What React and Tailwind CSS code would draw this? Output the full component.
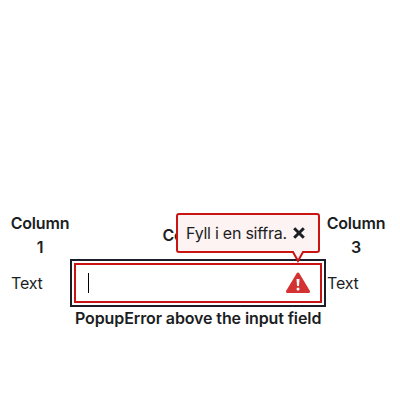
import React from "react";

function ErrorPopup() {
  return (
    <div role="alert" className="absolute left-[176px] top-[213px] z-10 flex h-10 w-36 items-center rounded-[3px] border-2 border-[#c91414] bg-[#fcf3f2] pl-2">
      <span className="whitespace-nowrap text-[16px] tracking-[-0.25px]">Fyll i en siffra.</span>
      <button aria-label="Close" className="absolute left-[115px] top-3">
        <svg width="12" height="12" viewBox="0 0 12 12" className="block">
          <path d="M1.2 1.2 10.8 10.8M10.8 1.2 1.2 10.8" stroke="#1b1e23" strokeWidth="3" />
        </svg>
      </button>
      <svg width="14" height="12" viewBox="0 0 14 12" className="absolute left-[113px] top-[36px]">
        <path d="M1.5 0 7 10 12.5 0Z" fill="#fcf3f2" />
        <path d="M0 1H2L7 10 12 1H14" fill="none" stroke="#c91414" strokeWidth="2" />
      </svg>
    </div>
  );
}

export default function App() {
  return (
    <main className="relative h-[400px] w-[400px] overflow-hidden bg-white pt-[211px] font-['Inter','Liberation_Sans',sans-serif] text-[16px] leading-6 text-[#1b1e23]">
      <div className="grid grid-cols-[60px_256px_60px] grid-rows-[48px_47px_24px] pl-[10px]">
        <div className="flex items-center justify-center text-center font-semibold tracking-[-0.2px]"><span className="w-[60px]">Column 1</span></div>
        <div className="flex items-center justify-center pl-px font-semibold tracking-[-0.2px]">Column 2</div>
        <div className="flex items-center justify-center text-center font-semibold tracking-[-0.2px]"><span className="w-[60px]">Column 3</span></div>
        <div className="flex h-12 items-center pl-px tracking-[-0.2px]">Text</div>
        <div className="h-12 border-2 border-[#1b1e29] p-[2px]">
          <div className="flex h-10 items-center justify-between border-2 border-[#c91414] pl-3 pr-[10px]">
            <span className="h-5 w-px bg-black" />
            <svg width="24" height="22" viewBox="0 0 24 22">
              <path d="M12 2 22.5 19.5H1.5Z" fill="#d43232" stroke="#d43232" strokeWidth="3" strokeLinejoin="round" />
              <path d="M10.5 7H13.5L13 14H11Z" fill="white" />
              <circle cx="12" cy="17" r="1.5" fill="white" />
            </svg>
          </div>
        </div>
        <div className="flex h-12 items-center pl-px tracking-[-0.2px]">Text</div>
        <div className="col-start-2 whitespace-nowrap pl-[5px] font-semibold tracking-[-0.11px]">PopupError above the input field</div>
      </div>
      <ErrorPopup />
    </main>
  );
}
